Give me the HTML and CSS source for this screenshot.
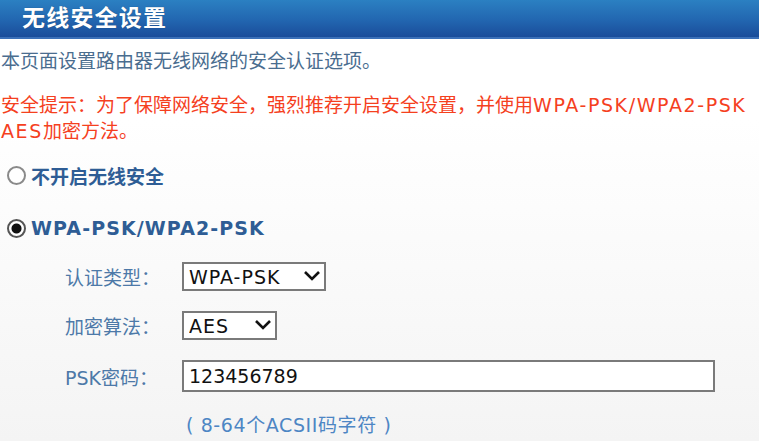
FILE: index.html
```html
<!DOCTYPE html>
<html lang="zh-CN">
<head>
<meta charset="utf-8">
<title>无线安全设置</title>
<link rel="stylesheet" href="styles.css">
</head>
<body>
<div class="header"><h1 class="title">无线安全设置</h1></div>
<div class="content">
  <p class="intro">本页面设置路由器无线网络的安全认证选项。</p>
  <p class="warn">安全提示：为了保障网络安全，强烈推荐开启安全设置，并使用<span class="wide">WPA-PSK/WPA2-PSK</span><br><span class="wide">AES</span>加密方法。</p>
  <label class="radio-row first"><input type="radio" name="sec" class="radio"><span class="radio-text">不开启无线安全</span></label>
  <label class="radio-row second"><input type="radio" name="sec" class="radio" checked><span class="radio-text latin">WPA-PSK/WPA2-PSK</span></label>
  <div class="form">
    <span class="label">认证类型：</span>
    <span class="select-wrap w1"><select class="select"><option>WPA-PSK</option></select><svg class="chev" width="18" height="12" viewBox="0 0 18 12"><path d="M2 2 L9 9 L16 2" fill="none" stroke="#111" stroke-width="2.6"/></svg></span>
    <span class="label">加密算法：</span>
    <span class="select-wrap w2"><select class="select"><option>AES</option></select><svg class="chev" width="18" height="12" viewBox="0 0 18 12"><path d="M2 2 L9 9 L16 2" fill="none" stroke="#111" stroke-width="2.6"/></svg></span>
    <span class="label">PSK密码：</span>
    <input class="text-input" type="text" value="123456789">
    <span></span>
    <span class="hint">( 8-64个ACSII码字符 )</span>
  </div>
</div>
</body>
</html>
```

FILE: styles.css
```css
html, body {
  margin: 0;
  padding: 0;
}
body {
  width: 759px;
  height: 441px;
  overflow: hidden;
  background: linear-gradient(to bottom, #ffffff 40px, #ffffff 120px, #f4f4f4 441px);
  font-family: "DejaVu Sans", "Noto Sans CJK SC", sans-serif;
  font-size: 19px;
}
.header {
  height: 37px;
  border-bottom: 2px solid #3b70b8;
  background: linear-gradient(to bottom, #2b80c2 0%, #2266b0 55%, #1a4d9a 100%);
}
.title {
  margin: 0;
  padding-left: 22px;
  font-family: "Noto Sans CJK SC", sans-serif;
  font-size: 23px;
  font-weight: bold;
  letter-spacing: 1.2px;
  line-height: 33px;
  color: #ffffff;
  text-shadow: 0 0 1px rgba(0, 0, 0, 0.4);
}
.content {
  padding-left: 1px;
}
.intro {
  margin: 0;
  padding-top: 8px;
  line-height: 26px;
  color: #4a6d8f;
  font-family: "Noto Sans CJK SC", sans-serif;
}
.warn {
  margin: 0;
  padding-top: 19px;
  line-height: 26px;
  color: #f5401e;
}
.wide {
  letter-spacing: 1.6px;
}
.radio-row {
  display: flex;
  align-items: center;
  gap: 5px;
  padding-left: 6px;
  height: 28px;
}
.radio-row.first {
  margin-top: 17px;
}
.radio-row.second {
  margin-top: 25px;
}
.radio {
  appearance: none;
  -webkit-appearance: none;
  margin: 0;
  width: 19px;
  height: 19px;
  border-radius: 50%;
  border: 2px solid #8a8a8a;
  background: #ffffff;
  box-sizing: border-box;
}
.radio:checked {
  border-color: #555555;
  background: radial-gradient(circle, #111111 0, #111111 4.5px, #ffffff 5.5px);
}
.radio-text {
  font-weight: bold;
  color: #2e5d95;
}
.radio-text.latin {
  letter-spacing: 1.1px;
}
.form {
  display: grid;
  grid-template-columns: 117px auto;
  align-items: center;
  justify-items: start;
  row-gap: 20px;
  padding-left: 64px;
  margin-top: 20px;
}
.label {
  color: #4d79a8;
}
.select-wrap {
  position: relative;
  display: inline-block;
}
.select-wrap.w1 .select { width: 144px; }
.select-wrap.w2 .select { width: 95px; }
.select {
  appearance: none;
  -webkit-appearance: none;
  height: 29px;
  box-sizing: border-box;
  border: 2px solid #7a7a7a;
  border-radius: 0;
  background: #ffffff;
  padding: 0 0 0 5px;
  font-family: "DejaVu Sans", sans-serif;
  font-size: 19px;
  letter-spacing: 1px;
  color: #111111;
  margin: 0;
}
.chev {
  position: absolute;
  right: 5px;
  top: 8px;
  pointer-events: none;
}
.text-input {
  width: 533px;
  height: 32px;
  box-sizing: border-box;
  border: 2px solid #7a7a7a;
  background: #ffffff;
  padding: 0 0 0 5px;
  font-family: "DejaVu Sans", sans-serif;
  font-size: 19px;
  color: #111111;
  margin: 0;
}
.hint {
  color: #4d86c4;
  margin-left: 4px;
  margin-top: -2px;
  letter-spacing: 0.6px;
}
```
